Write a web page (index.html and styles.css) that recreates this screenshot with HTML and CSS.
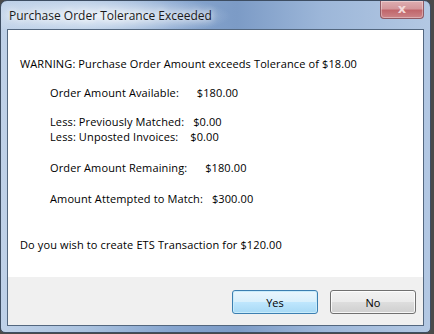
FILE: index.html
```html
<!DOCTYPE html>
<html lang="en">

<head>
    <meta charset="UTF-8">
    <meta name="viewport" content="width=device-width, initial-scale=1.0">
    <title>Purchase Order Tolerance Exceeded</title>
    <link rel="stylesheet" href="styles.css">
</head>

<body>
    <div class="window">
        <div class="titlebar">
            <span class="title">Purchase Order Tolerance Exceeded</span>
            <span class="close-btn">x</span>
        </div>
        <div class="client">
            <div class="message">
                <p class="line">WARNING: Purchase Order Amount exceeds Tolerance of $18.00</p>
                <p class="line indent gap-a">Order Amount Available:      $180.00</p>
                <p class="line indent gap-a">Less: Previously Matched:   $0.00</p>
                <p class="line indent">Less: Unposted Invoices:    $0.00</p>
                <p class="line indent gap-b">Order Amount Remaining:      $180.00</p>
                <p class="line indent gap-b">Amount Attempted to Match:   $300.00</p>
                <p class="line gap-c">Do you wish to create ETS Transaction for $120.00</p>
            </div>
            <div class="buttons">
                <button class="btn default">Yes</button>
                <button class="btn">No</button>
            </div>
        </div>
    </div>
</body>

</html>
```
FILE: styles.css
```css
body {
    margin: 0;
    width: 434px;
    height: 334px;
    overflow: hidden;
    background: #4a4a4a;
    font-family: "Open Sans", "Noto Sans", sans-serif;
    font-size: 11px;
    color: #000;
}

.window {
    width: 431px;
    height: 333px;
    box-sizing: border-box;
    border: 1px solid #3d4d62;
    border-radius: 7px 7px 5px 5px;
    padding: 0 6px 6px 6px;
    display: flex;
    flex-direction: column;
    background:
        radial-gradient(ellipse 130px 22px at 100px 15px, rgba(235, 242, 250, 0.95), rgba(235, 242, 250, 0) 100%),
        linear-gradient(to right, #bfd1e8 0%, #aac2df 20%, #86a5cf 40%, #7c9bc6 55%, #9db7d9 75%, #b3c8e3 100%);
}

.titlebar {
    height: 28px;
    display: flex;
    align-items: flex-start;
    justify-content: space-between;
}

.title {
    margin: 6px 0 0 2px;
    font-size: 12px;
    color: #1a1a1a;
    text-shadow: 0 0 6px #fff, 0 0 10px #fff;
}

.close-btn {
    width: 44px;
    height: 18px;
    box-sizing: border-box;
    border: 1px solid #8f5a64;
    border-top: none;
    border-radius: 0 0 4px 4px;
    background: linear-gradient(to bottom, #deaeb1 0%, #d4979b 45%, #c0666b 55%, #cc8488 100%);
    box-shadow: inset 0 0 0 1px rgba(255, 255, 255, 0.35);
    color: #f3dada;
    font-family: "DejaVu Sans", sans-serif;
    font-weight: bold;
    font-size: 13px;
    line-height: 15px;
    text-align: center;
}

.client {
    flex: 1;
    display: flex;
    flex-direction: column;
    border: 1px solid #53677f;
    background: #f0f0f0;
}

.message {
    height: 247px;
    box-sizing: border-box;
    background: #fff;
    padding: 26px 12px 0 12px;
    letter-spacing: 0.12px;
}

.line {
    margin: 0;
    line-height: 15px;
    white-space: pre;
}

.indent {
    padding-left: 30px;
}

.gap-a {
    margin-top: 14px;
}

.gap-b {
    margin-top: 16px;
}

.gap-c {
    margin-top: 31px;
}

.buttons {
    display: flex;
    justify-content: flex-end;
    gap: 12px;
    padding: 13px 7px 0 0;
}

.btn {
    width: 86px;
    height: 24px;
    padding: 0;
    border: 1px solid #707070;
    border-radius: 3px;
    font-family: "Open Sans", "Noto Sans", sans-serif;
    font-size: 11px;
    color: #000;
    background: linear-gradient(to bottom, #f2f2f2 0%, #ebebeb 48%, #dddddd 52%, #cfcfcf 100%);
    box-shadow: inset 0 0 0 1px rgba(255, 255, 255, 0.8);
}

.btn.default {
    border-color: #3c7fb1;
    background: linear-gradient(to bottom, #eaf6fd 0%, #d9f0fc 48%, #bee6fd 52%, #a7d9f5 100%);
    box-shadow: inset 0 0 0 1px #c9ecfb;
}
```
